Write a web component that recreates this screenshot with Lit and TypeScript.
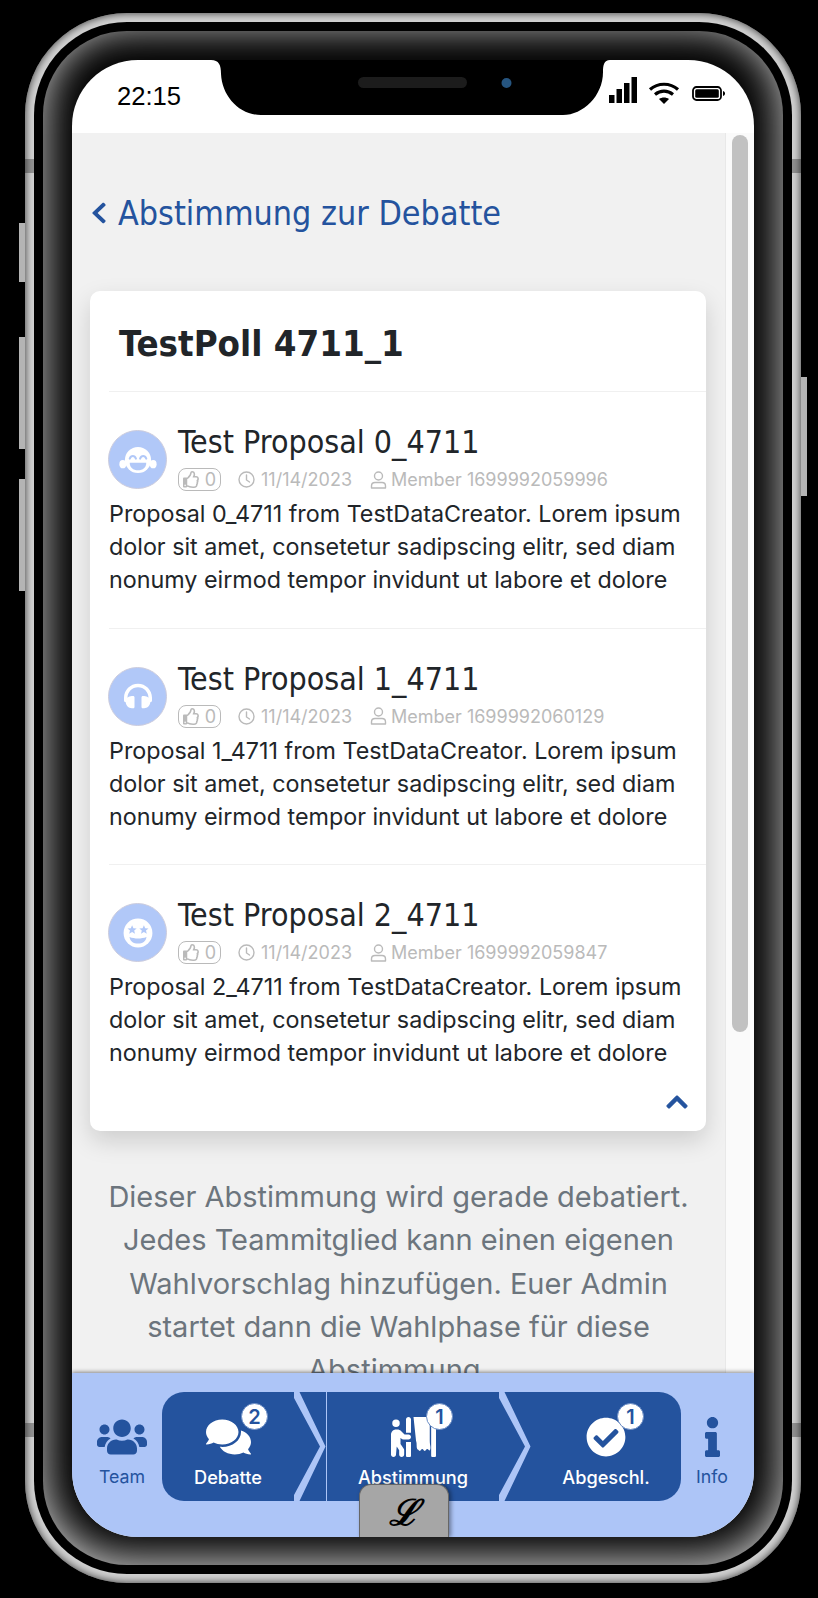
import { LitElement, html, css, svg } from 'lit';
import { customElement } from 'lit/decorators.js';

const ICON_USERS = 'M96 224c35.3 0 64-28.7 64-64s-28.7-64-64-64-64 28.7-64 64 28.7 64 64 64zm448 0c35.3 0 64-28.7 64-64s-28.7-64-64-64-64 28.7-64 64 28.7 64 64 64zm32 32h-64c-17.6 0-33.5 7.1-45.1 18.6 40.3 22.1 68.9 62 75.1 109.4h66c17.7 0 32-14.3 32-32v-32c0-35.3-28.7-64-64-64zm-256 0c61.9 0 112-50.1 112-112S381.9 32 320 32 208 82.1 208 144s50.1 112 112 112zm76.8 32h-8.3c-20.8 10-43.9 16-68.5 16s-47.6-6-68.5-16h-8.3C179.6 288 128 339.6 128 403.2V432c0 26.5 21.5 48 48 48h288c26.5 0 48-21.5 48-48v-28.8c0-63.6-51.6-115.2-115.2-115.2zm-223.7-13.4C161.5 263.1 145.6 256 128 256H64c-35.3 0-64 28.7-64 64v32c0 17.7 14.3 32 32 32h65.9c6.3-47.4 34.9-87.3 75.2-109.4z';
const ICON_COMMENTS = 'M416 192c0-88.4-93.1-160-208-160S0 103.6 0 192c0 34.3 14.1 65.9 38 92-13.4 30.2-35.5 54.2-35.8 54.5-2.2 2.3-2.8 5.7-1.5 8.7S4.8 352 8 352c36.6 0 66.9-12.3 88.7-25 32.2 15.7 70.3 25 111.3 25 114.9 0 208-71.6 208-160zm122 220c23.9-26 38-57.7 38-92 0-66.9-53.5-124.2-129.3-148.1.9 6.6 1.3 13.3 1.3 20.1 0 105.9-107.7 192-240 192-10.8 0-21.3-.8-31.7-1.9C207.8 439.6 281.8 480 368 480c41 0 79.1-9.2 111.3-25 21.8 12.7 52.1 25 88.7 25 3.2 0 6.1-1.9 7.3-4.8 1.3-2.9.7-6.3-1.5-8.7-.3-.3-22.4-24.2-35.8-54.5z';
const ICON_CHECK = 'M504 256c0 136.967-111.033 248-248 248S8 392.967 8 256 119.033 8 256 8s248 111.033 248 248zM227.314 387.314l184-184c6.248-6.248 6.248-16.379 0-22.627l-22.627-22.627c-6.248-6.249-16.379-6.249-22.628 0L216 308.118l-70.059-70.059c-6.248-6.248-16.379-6.248-22.628 0l-22.627 22.627c-6.248 6.248-6.248 16.379 0 22.627l104 104c6.249 6.249 16.379 6.249 22.628.001z';
const ICON_INFO = 'M20 424.229h20V279.771H20c-11.046 0-20-8.954-20-20V212c0-11.046 8.954-20 20-20h112c11.046 0 20 8.954 20 20v212.229h20c11.046 0 20 8.954 20 20V492c0 11.046-8.954 20-20 20H20c-11.046 0-20-8.954-20-20v-47.771c0-11.046 8.954-20 20-20zM96 0C56.235 0 24 32.235 24 72s32.235 72 72 72 72-32.235 72-72S135.764 0 96 0z';
const ICON_LEFT = 'M34.52 239.03L228.87 44.69c9.37-9.37 24.57-9.37 33.94 0l22.67 22.67c9.36 9.36 9.37 24.52.04 33.9L131.49 256l154.02 154.75c9.34 9.38 9.32 24.54-.04 33.9l-22.67 22.67c-9.37 9.37-24.57 9.37-33.94 0L34.52 272.97c-9.37-9.37-9.37-24.57 0-33.94z';
const ICON_UP = 'M240.971 130.524l194.343 194.343c9.373 9.373 9.373 24.569 0 33.941l-22.667 22.667c-9.357 9.357-24.522 9.375-33.901.04L224 227.495 69.255 381.516c-9.379 9.335-24.544 9.317-33.901-.04l-22.667-22.667c-9.373-9.373-9.373-24.569 0-33.941L207.03 130.525c9.372-9.373 24.568-9.373 33.941-.001z';
const ICON_HEADPHONES = 'M256 32C114.52 32 0 146.496 0 288v48a32 32 0 0 0 17.689 28.622l14.383 7.191C34.083 431.903 83.421 480 144 480h24c13.255 0 24-10.745 24-24V280c0-13.255-10.745-24-24-24h-24c-31.342 0-59.671 12.879-80 33.627V288c0-105.869 86.131-192 192-192s192 86.131 192 192v1.627C427.671 268.879 399.342 256 368 256h-24c-13.255 0-24 10.745-24 24v176c0 13.255 10.745 24 24 24h24c60.579 0 109.917-48.098 111.928-108.187l14.382-7.191A32 32 0 0 0 512 336v-48c0-141.504-114.52-256-256-256z';
const ICON_THUMB = 'M466.27 286.69C475.04 271.84 480 256 480 236.85c0-44.015-37.218-85.58-85.82-85.58H357.7c4.92-12.81 8.85-28.13 8.85-46.54C366.55 31.936 328.86 0 271.28 0c-61.607 0-58.093 94.933-71.76 108.6-22.747 22.747-49.615 66.447-68.76 83.4H32c-17.673 0-32 14.327-32 32v240c0 17.673 14.327 32 32 32h64c14.893 0 27.408-10.174 30.978-23.95 44.509 1.001 75.06 39.94 177.802 39.94 7.22 0 15.22.01 22.22.01 77.117 0 111.986-39.423 112.94-95.33 13.319-18.425 20.299-43.122 17.34-66.99 9.854-18.452 13.664-40.343 8.99-62.99zm-61.75 53.83c12.56 21.13 1.26 49.41-13.94 57.57 7.7 48.78-17.608 65.9-53.12 65.9h-37.82c-71.639 0-118.029-37.82-171.64-37.82V240h10.92c28.36 0 67.98-70.89 94.54-97.46 28.36-28.36 18.91-75.63 37.82-94.54 47.27 0 47.27 32.98 47.27 56.73 0 39.17-28.36 56.72-28.36 94.54h103.99c21.11 0 37.73 18.91 37.82 37.82.09 18.9-12.82 37.81-28.82 37.81 22.4 24.15 7.14 57.33-6.03 64.47zM88 432c0 13.255-10.745 24-24 24s-24-10.745-24-24 10.745-24 24-24 24 10.745 24 24z';

const BLUE = '#b1c8f8';

const avatars = [
  // tears of joy
  svg`<svg viewBox="0 0 58 58" width="40" height="40"><circle cx="29" cy="29" r="19" fill="#fff"/>
    <ellipse cx="7" cy="35" rx="5" ry="6" fill="#fff"/><ellipse cx="51" cy="35" rx="5" ry="6" fill="#fff"/>
    <path d="M17 27c2-5 7-5 9 0M32 27c2-5 7-5 9 0" fill="none" stroke="${BLUE}" stroke-width="3" stroke-linecap="round"/>
    <path d="M17 33h24c0 7-5 11-12 11s-12-4-12-11z" fill="${BLUE}"/></svg>`,
  svg`<svg viewBox="0 0 512 512" width="28" height="28"><path fill="#fff" d="${ICON_HEADPHONES}"/></svg>`,
  // star eyes
  svg`<svg viewBox="0 0 58 58" width="38" height="38"><circle cx="29" cy="29" r="22" fill="#fff"/>
    <path d="M20 17l2 4.600 5 .4-3.800 3.300 1.200 4.900-4.400-2.600-4.400 2.600 1.200-4.900L13 22l5-.4zM38 17l2 4.600 5 .4-3.800 3.300 1.200 4.900-4.400-2.600-4.400 2.600 1.200-4.900L31 22l5-.4z" fill="${BLUE}"/>
    <path d="M16 35c8 3 18 3 26 0-1 7-6 10-13 10s-12-3-13-10z" fill="${BLUE}"/></svg>`,
];

const proposals = [
  { n: 0, member: '1699992059996' },
  { n: 1, member: '1699992060129' },
  { n: 2, member: '1699992059847' },
];

@customElement('app-root')
export class AppRoot extends LitElement {
  static styles = css`
    :host {
      display: block;
      width: 818px;
      height: 1598px;
      background: #000;
      overflow: hidden;
      font-family: Inter, 'Noto Sans', sans-serif;
    }
    * { box-sizing: border-box; }
    .phone {
      position: relative;
      width: 776px;
      height: 1570px;
      margin: 13px 0 0 25px;
      padding: 9px;
      border-radius: 102px;
      background: #d2d2d2;
      box-shadow: inset 0 0 9px #333;
    }
    .side {
      position: absolute;
      width: 6px;
      background: #b4b4b4;
    }
    .vol1 { left: -6px; top: 210px; height: 59px; }
    .vol2 { left: -6px; top: 324px; height: 112px; }
    .vol3 { left: -6px; top: 466px; height: 112px; }
    .power { right: -6px; top: 364px; height: 119px; }
    .band {
      position: absolute;
      width: 9px;
      height: 14px;
      background: rgba(0, 0, 0, 0.3);
    }
    .band.l { left: 0; }
    .band.r { right: 0; }
    .band.up { top: 146px; }
    .band.down { top: 1410px; }
    .gap {
      position: relative;
      height: 100%;
      padding: 9px;
      border-radius: 93px;
      background: #000;
    }
    .bezel {
      height: 100%;
      padding: 29px 29px 28px;
      border-radius: 84px;
      background: #000;
      box-shadow: inset 0 -5px 44px #d4d4d4;
    }
    .screen {
      position: relative;
      height: 100%;
      display: flex;
      flex-direction: column;
      border-radius: 66px;
      overflow: hidden;
      background: #fff;
    }

    .status {
      flex: none;
      height: 73px;
      display: flex;
      justify-content: space-between;
      padding: 21px 29px 0 45px;
    }
    .time {
      font: 25.6px/30px 'Liberation Sans', Arial, sans-serif;
      color: #000;
    }
    .sys {
      display: flex;
      align-items: flex-start;
    }
    .signal { margin-top: -4px; }
    .wifi { margin: 1px 12px 0 11px; }
    .battery { margin-top: 5px; }
    .notch {
      position: absolute;
      left: 139px;
      top: 0;
    }

    .content {
      flex: 1;
      min-height: 0;
      display: flex;
      background: #f1f1f1;
    }
    .main {
      flex: 1;
      min-width: 0;
      overflow: hidden;
    }
    .back {
      display: flex;
      align-items: center;
      gap: 11px;
      height: 60px;
      margin: 50px 0 48px 19px;
      color: #24539e;
      font-family: 'DejaVu Sans', sans-serif;
      font-stretch: condensed;
      font-size: 33.8px;
      white-space: nowrap;
    }
    .card {
      width: 616px;
      height: 840px;
      margin-left: 18px;
      display: flex;
      flex-direction: column;
      background: #fff;
      border-radius: 10px;
      box-shadow: 0 10px 24px rgba(0, 0, 0, 0.15);
    }
    .card h2 {
      flex: none;
      height: 100px;
      margin: 0;
      padding: 29px 0 0 29px;
      font-family: 'DejaVu Sans', sans-serif;
      font-stretch: condensed;
      font-weight: 700;
      font-size: 36.3px;
      line-height: 48px;
      color: #212529;
    }
    .proposal {
      flex: none;
      height: 236.5px;
      margin-left: 19px;
      padding-top: 32px;
      border-top: 1px solid #f0f0f0;
    }
    .head {
      display: flex;
      gap: 11px;
    }
    .avatar {
      flex: none;
      width: 59px;
      height: 59px;
      display: flex;
      align-items: center;
      justify-content: center;
      margin: 6px 0 0 -1px;
      border-radius: 50%;
      background: ${css([BLUE] as unknown as TemplateStringsArray)};
      border: 1px solid #ccd;
    }
    .title {
      font-family: 'DejaVu Sans', sans-serif;
      font-stretch: condensed;
      font-size: 31.9px;
      line-height: 36px;
      color: #212529;
      white-space: nowrap;
    }
    .meta {
      display: flex;
      align-items: center;
      height: 23px;
      margin-top: 8px;
      color: #bababa;
      font-size: 18px;
      white-space: nowrap;
    }
    .likes {
      display: flex;
      align-items: center;
      justify-content: center;
      gap: 5px;
      width: 43px;
      height: 23px;
      margin-right: 17px;
      border: 1px solid #bababa;
      border-radius: 8px;
    }
    .stamp {
      display: flex;
      align-items: center;
      gap: 6px;
      margin-right: 18px;
    }
    .stamp + .stamp { gap: 4px; }
    .body {
      margin: 6px 0 0;
      width: 584px;
      font-size: 23.3px;
      line-height: 33px;
      color: #212529;
    }
    .toggle {
      flex: none;
      display: flex;
      justify-content: flex-end;
      margin-top: -10.5px;
      padding-right: 17px;
    }
    .toggle svg { stroke: #24539e; stroke-width: 16; }
    .note {
      margin: 44px 0 0;
      padding: 0 22px;
      text-align: center;
      font-size: 29px;
      line-height: 43.3px;
      color: #6c757d;
    }

    .track {
      flex: none;
      width: 29px;
      padding: 2px 6px 0;
      background: #fafafa;
      border-left: 1px solid #e8e8e8;
    }
    .thumb {
      height: 897px;
      border-radius: 8px;
      background: #c1c1c1;
    }

    .bar {
      position: relative;
      flex: none;
      height: 164px;
      display: flex;
      align-items: flex-start;
      padding-top: 19px;
      background: #adc5f7;
      box-shadow: 0 -1px 4px rgba(0, 0, 0, 0.45);
    }
    .tab {
      display: flex;
      flex-direction: column;
      align-items: center;
      padding-top: 25px;
      color: #24539e;
      font-size: 17.8px;
      line-height: 24px;
    }
    .tab svg, .step svg.icon {
      display: block;
      height: 40px;
      margin-bottom: 8px;
      fill: currentColor;
    }
    .tab.team { width: 50px; margin: 0 15px 0 25px; }
    .tab.info { width: 32px; margin-left: 15px; }
    .steps {
      display: flex;
      height: 109px;
      border-radius: 22px;
      background: #24539e;
      color: #fff;
    }
    .step {
      position: relative;
      display: flex;
      flex-direction: column;
      align-items: center;
      padding: 25px 32px 0 0;
      font-size: 18.2px;
      font-weight: 500;
      line-height: 24px;
    }
    .step.s1 { width: 165px; border-right: 1px solid #adc5f7; }
    .step.s2 { width: 204px; }
    .step.s3 { width: 150px; padding-right: 0; }
    .chev {
      position: absolute;
      right: 0;
      top: 0;
    }
    .icon-wrap {
      position: relative;
    }
    .badge {
      position: absolute;
      left: calc(50% + 13px);
      top: -14px;
      width: 27px;
      height: 27px;
      display: flex;
      align-items: center;
      justify-content: center;
      border-radius: 50%;
      background: #fff;
      border: 1px solid #6a8cc4;
      color: #24539e;
      font-size: 20px;
      font-weight: 600;
      line-height: 1;
    }
    .s3 .badge { left: calc(50% + 11px); }
    .logo {
      position: absolute;
      left: 287px;
      bottom: 0;
      width: 90px;
      height: 53px;
      display: flex;
      align-items: center;
      justify-content: center;
      border: 1px solid #666;
      border-bottom: 0;
      border-radius: 12px 12px 0 0;
      background: #a6a6a6;
      box-shadow: 2px 0 4px rgba(0, 0, 0, 0.4);
      color: #000;
      font: italic 700 36px 'DejaVu Serif', serif;
    }
  `;

  private chevron() {
    return html`<svg class="chev" width="32" height="109" viewBox="0 0 32 109">
      <path fill="#adc5f7" d="M0 0h5.500l26 54.500-26 54.500H0v-6l26-48.500L0 6z"/>
    </svg>`;
  }

  private proposal(p: { n: number; member: string }) {
    const title = `Test Proposal ${p.n}_4711`;
    const member = `Member ${p.member}`;
    const text = `Proposal ${p.n}_4711 from TestDataCreator. Lorem ipsum dolor sit amet, consetetur sadipscing elitr, sed diam nonumy eirmod tempor invidunt ut labore et dolore`;
    return html`
      <div class="proposal">
        <div class="head">
          <div class="avatar">${avatars[p.n]}</div>
          <div>
            <div class="title">${title}</div>
            <div class="meta">
              <span class="likes">
                <svg width="17" height="17" viewBox="0 0 512 512"><path fill="#bababa" d="${ICON_THUMB}"/></svg>0
              </span>
              <span class="stamp">
                <svg width="17" height="17" viewBox="0 0 17 17" fill="none" stroke="#bababa" stroke-width="1.400"><circle cx="8.500" cy="8.500" r="7.500"/><path d="M8.500 4v5l3 2" stroke-linecap="round"/></svg>
                11/14/2023
              </span>
              <span class="stamp">
                <svg width="17" height="18" viewBox="0 0 17 18" fill="none" stroke="#bababa" stroke-width="1.400"><circle cx="8.500" cy="5" r="4"/><path d="M1.500 17v-2c0-2 1.500-3.500 3.500-3.500h7c2 0 3.500 1.500 3.500 3.500v2z" stroke-linejoin="round"/></svg>
                ${member}
              </span>
            </div>
          </div>
        </div>
        <p class="body">${text}</p>
      </div>
    `;
  }

  render() {
    return html`
      <div class="phone">
        <i class="side vol1"></i><i class="side vol2"></i><i class="side vol3"></i><i class="side power"></i>
        <i class="band l up"></i><i class="band r up"></i><i class="band l down"></i><i class="band r down"></i>
        <div class="gap"><div class="bezel"><div class="screen">
          <div class="status">
            <span class="time">22:15</span>
            <div class="sys">
              <svg class="signal" width="28" height="26" viewBox="0 0 28 26"><path d="M0 18h5.500v8H0zM7.500 12H13v14H7.500zM15 6h5.500v20H15zM22.500 0H28v26h-5.500z"/></svg>
              <svg class="wifi" width="32" height="22" viewBox="0 0 32 22" fill="none" stroke="#000" stroke-width="3.200"><path d="M2 7.500c8-7 20-7 28 0M7 12.500c5.500-4.500 12.500-4.500 18 0"/><path d="M16 22l-5-5c3-2 7-2 10 0z" fill="#000" stroke="none"/></svg>
              <svg class="battery" width="33" height="15" viewBox="0 0 33 15"><rect x="1" y="1" width="28" height="13" rx="3.500" fill="none" stroke="#000" stroke-width="1.800"/><rect x="3.200" y="3.200" width="23.600" height="8.600" rx="1.500"/><path d="M31 5c1.500.5 2 1.500 2 2.500S32.500 9.500 31 10z"/></svg>
            </div>
          </div>
          <svg class="notch" width="399" height="55" viewBox="0 0 399 55">
            <path d="M0 0h399c-6 0-7 5-7 12 0 24-20 43-40 43H50C28 55 11 36 10 14 10 5 8 0 0 0z"/>
            <rect x="147" y="17" width="109" height="11" rx="5.500" fill="#1c1c1c"/>
            <circle cx="295.500" cy="23" r="5" fill="#265580"/>
          </svg>
          <div class="content">
            <div class="main">
              <div class="back">
                <svg width="16" height="24" viewBox="0 0 320 512" preserveAspectRatio="none"><path fill="#24539e" d="${ICON_LEFT}"/></svg>
                Abstimmung zur Debatte
              </div>
              <div class="card">
                <h2>TestPoll 4711_1</h2>
                ${proposals.map((p) => this.proposal(p))}
                <div class="toggle">
                  <svg width="24" height="24" viewBox="0 0 448 512"><path fill="#24539e" d="${ICON_UP}"/></svg>
                </div>
              </div>
              <p class="note">Dieser Abstimmung wird gerade debatiert. Jedes Teammitglied kann einen eigenen Wahlvorschlag hinzufügen. Euer Admin startet dann die Wahlphase für diese Abstimmung.</p>
            </div>
            <div class="track"><div class="thumb"></div></div>
          </div>
          <div class="bar">
            <div class="tab team">
              <svg viewBox="0 0 640 512"><path d="${ICON_USERS}"/></svg>
              Team
            </div>
            <div class="steps">
              <div class="step s1">
                <div class="icon-wrap">
                  <svg class="icon" viewBox="0 0 576 512"><path d="${ICON_COMMENTS}"/></svg>
                  <span class="badge">2</span>
                </div>
                Debatte
                ${this.chevron()}
              </div>
              <div class="step s2">
                <div class="icon-wrap">
                  <svg class="icon" viewBox="0 0 576 512"><path d="M64 32a48 48 0 1 1 0 96 48 48 0 0 1 0-96zM18.700 178.700C30.800 166.700 46.900 160 64 160h18.700c17 0 33.200 6.700 45.300 18.700l45.300 45.300H224c17.700 0 32 14.300 32 32s-14.300 32-32 32h-64c-11.300 0-21.600-4.300-29.400-12.100l-9-9V344l41.500 62.100c3.500 5.300 5.400 11.500 5.400 17.800V480c0 17.700-14.300 32-32 32s-32-14.300-32-32v-56l-29.100-43c-.9-.4-1.600-1.200-2.500-1.700L64 480c0 17.700-14.400 32-32.100 32C14.300 512 0 497.700 0 480l.2-160L0 224.100c0-17.100 6.700-33.200 18.700-45.400zM192 32c0-17.700 14.300-32 32-32s32 14.300 32 32v168h-64zM192 320h64v176c0 8.800-7.200 16-16 16h-32c-8.800 0-16-7.200-16-16zM288 0h208v300c0 60 20 90 0 130-16 0-16-20-32-20s-16 24-32 24-16-24-32-24-16 24-32 24-16-20-32-20c-16-40 0-70-16-114zM514 112h62v384c0 8.800-7.200 16-16 16h-30c-8.800 0-16-7.200-16-16z"/></svg>
                  <span class="badge">1</span>
                </div>
                Abstimmung
                ${this.chevron()}
              </div>
              <div class="step s3">
                <div class="icon-wrap">
                  <svg class="icon" viewBox="0 0 512 512"><path d="${ICON_CHECK}"/></svg>
                  <span class="badge">1</span>
                </div>
                Abgeschl.
              </div>
            </div>
            <div class="tab info">
              <svg viewBox="0 0 192 512"><path d="${ICON_INFO}"/></svg>
              Info
            </div>
            <div class="logo">ℒ</div>
          </div>
        </div></div></div>
      </div>
    `;
  }
}
